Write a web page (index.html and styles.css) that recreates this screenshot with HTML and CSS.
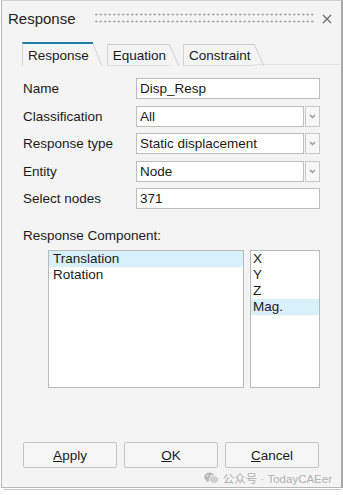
FILE: index.html
```
<!DOCTYPE html>
<html lang="en">
<head>
    <meta charset="UTF-8">
    <meta name="viewport" content="width=device-width, initial-scale=1.0">
    <title>Response</title>
    <link rel="stylesheet" href="styles.css">
</head>
<body>
    <div class="dialog">
        <!-- Barre de titre -->
        <div class="titlebar">
            <span class="title">Response</span>
            <span class="grip"></span>
            <svg class="close" width="10" height="10" viewBox="0 0 10 10">
                <path d="M1 1 L9 9 M9 1 L1 9" stroke="#6a6a6a" stroke-width="1.2" fill="none"/>
            </svg>
        </div>

        <!-- Onglets -->
        <div class="tabs">
            <div class="tab active">Response</div>
            <div class="tab">Equation</div>
            <div class="tab">Constraint</div>
            <div class="tab-fill"></div>
        </div>

        <!-- Formulaire -->
        <div class="form">
            <label>Name</label>
            <div class="field">Disp_Resp</div>

            <label>Classification</label>
            <div class="combo"><div class="field">All</div><span class="drop"></span></div>

            <label>Response type</label>
            <div class="combo"><div class="field">Static displacement</div><span class="drop"></span></div>

            <label>Entity</label>
            <div class="combo"><div class="field">Node</div><span class="drop"></span></div>

            <label>Select nodes</label>
            <div class="field">371</div>
        </div>

        <div class="section-label">Response Component:</div>
        <div class="lists">
            <div class="list list-main">
                <div class="item selected">Translation</div>
                <div class="item">Rotation</div>
            </div>
            <div class="list list-dir">
                <div class="item">X</div>
                <div class="item">Y</div>
                <div class="item">Z</div>
                <div class="item selected">Mag.</div>
            </div>
        </div>

        <div class="buttons">
            <button><u>A</u>pply</button>
            <button><u>O</u>K</button>
            <button><u>C</u>ancel</button>
        </div>

        <div class="watermark">
            <svg width="15" height="12" viewBox="0 0 15 12">
                <ellipse cx="5.5" cy="5" rx="5.3" ry="4.4" fill="#b9b9b9"/>
                <path d="M2.5 8 L1.8 10.5 L4.6 9 Z" fill="#b9b9b9"/>
                <ellipse cx="10" cy="7.6" rx="4.6" ry="3.8" fill="#cfcfcf" stroke="#f4f4f4" stroke-width="1"/>
                <circle cx="3.6" cy="3.8" r="0.8" fill="#f4f4f4"/>
                <circle cx="7.2" cy="3.8" r="0.8" fill="#f4f4f4"/>
            </svg>
            <span>公众号 · TodayCAEer</span>
        </div>
    </div>
    <div class="under"></div>
</body>
</html>
```
FILE: styles.css
```
body {
    margin: 0;
    background: #ffffff;
    font-family: "Liberation Sans", Arial, "Noto Sans CJK SC", sans-serif;
    font-size: 13.5px;
    color: #1a1a1a;
}
.dialog {
    position: relative;
    box-sizing: border-box;
    width: 342px;
    height: 488px;
    margin-left: 1px;
    background: #f4f4f4;
    border: 1px solid #b8b8b8;
    border-top-color: #d0d0d0;
    border-right: 2px solid #a8a8a8;
}
.under {
    margin-left: 4px;
    width: 337px;
    height: 3px;
    border-top: 1px solid #c4c4c4;
    margin-top: 1px;
}
.titlebar {
    display: flex;
    align-items: center;
    height: 35px;
    padding: 0 9px 0 6px;
}
.title {
    font-size: 15px;
    color: #222;
}
.grip {
    flex: 1;
    align-self: flex-start;
    height: 12px;
    margin: 10px 8px 0 18px;
    background-image: radial-gradient(circle, #a4a4a4 0.9px, transparent 1.1px);
    background-size: 4.5px 7px;
}
.close {
    display: block;
}
.tabs {
    display: flex;
    align-items: flex-end;
    height: 24px;
    margin-top: 6px;
    padding-left: 20px;
}
.tab {
    position: relative;
    box-sizing: border-box;
    height: 22px;
    line-height: 21px;
    padding: 0 3px 0 5px;
    margin-right: 14px;
    border-top: 1px solid #cdcdcd;
    border-left: 1px solid #d4d4d4;
    border-bottom: 1px solid #dcdcdc;
}
.tab::after {
    content: '';
    position: absolute;
    top: -1px;
    bottom: -1px;
    right: -10px;
    width: 10px;
    background: linear-gradient(to top right, transparent calc(50% - 0.7px), #c8c8c8, transparent calc(50% + 0.7px));
}
.tab.active {
    height: 24px;
    line-height: 23px;
    border-top: 2px solid #1d7ea6;
    border-bottom: none;
    padding: 0 4px 0 5px;
}
.tab.active::after {
    top: 0;
    bottom: 0;
    right: -9px;
    width: 9px;
}
.tab-fill {
    flex: 1;
    height: 0;
    border-bottom: 1px solid #e2e2e2;
    margin: 0 2px 1px -14px;
}
.form {
    display: grid;
    grid-template-columns: 113px 184px;
    grid-auto-rows: 21px;
    row-gap: 6.5px;
    align-items: center;
    margin-top: 12px;
    padding-left: 21px;
}
.field {
    box-sizing: border-box;
    height: 21px;
    line-height: 19px;
    padding-left: 3px;
    background: #ffffff;
    border: 1px solid #bdbdbd;
}
.combo {
    display: flex;
    gap: 1px;
}
.combo .field {
    flex: 1;
}
.drop {
    box-sizing: border-box;
    width: 15px;
    height: 21px;
    border: 1px solid #c9c9c9;
    background: #f7f7f7 url("data:image/svg+xml,%3Csvg xmlns='http://www.w3.org/2000/svg' width='7' height='5'%3E%3Cpath d='M1 1 L3.5 3.5 L6 1' stroke='%23999' stroke-width='1.5' fill='none'/%3E%3C/svg%3E") no-repeat center;
}
.section-label {
    margin: 19px 0 0 21px;
    height: 16px;
    line-height: 16px;
}
.lists {
    display: flex;
    gap: 6px;
    margin: 6px 0 0 46px;
}
.list {
    box-sizing: border-box;
    height: 138px;
    background: #ffffff;
    border: 1px solid #b9b9b9;
}
.list-main {
    width: 196px;
}
.list-dir {
    width: 70px;
}
.item {
    height: 16px;
    line-height: 16px;
    padding-left: 4px;
}
.list-dir .item {
    padding-left: 2px;
}
.item.selected {
    background: #d8f0fa;
}
.buttons {
    display: flex;
    gap: 7px;
    margin: 54px 0 0 21px;
}
.buttons button {
    box-sizing: border-box;
    width: 94px;
    height: 26px;
    font-family: inherit;
    font-size: 13.5px;
    color: #1a1a1a;
    background: #f6f6f6;
    border: 1px solid #c4c4c4;
    border-radius: 2px;
    padding: 0;
}
.watermark {
    position: absolute;
    right: 9px;
    bottom: 1px;
    display: flex;
    align-items: center;
    gap: 4px;
    font-size: 11.5px;
    color: #b0b0b0;
}
```
